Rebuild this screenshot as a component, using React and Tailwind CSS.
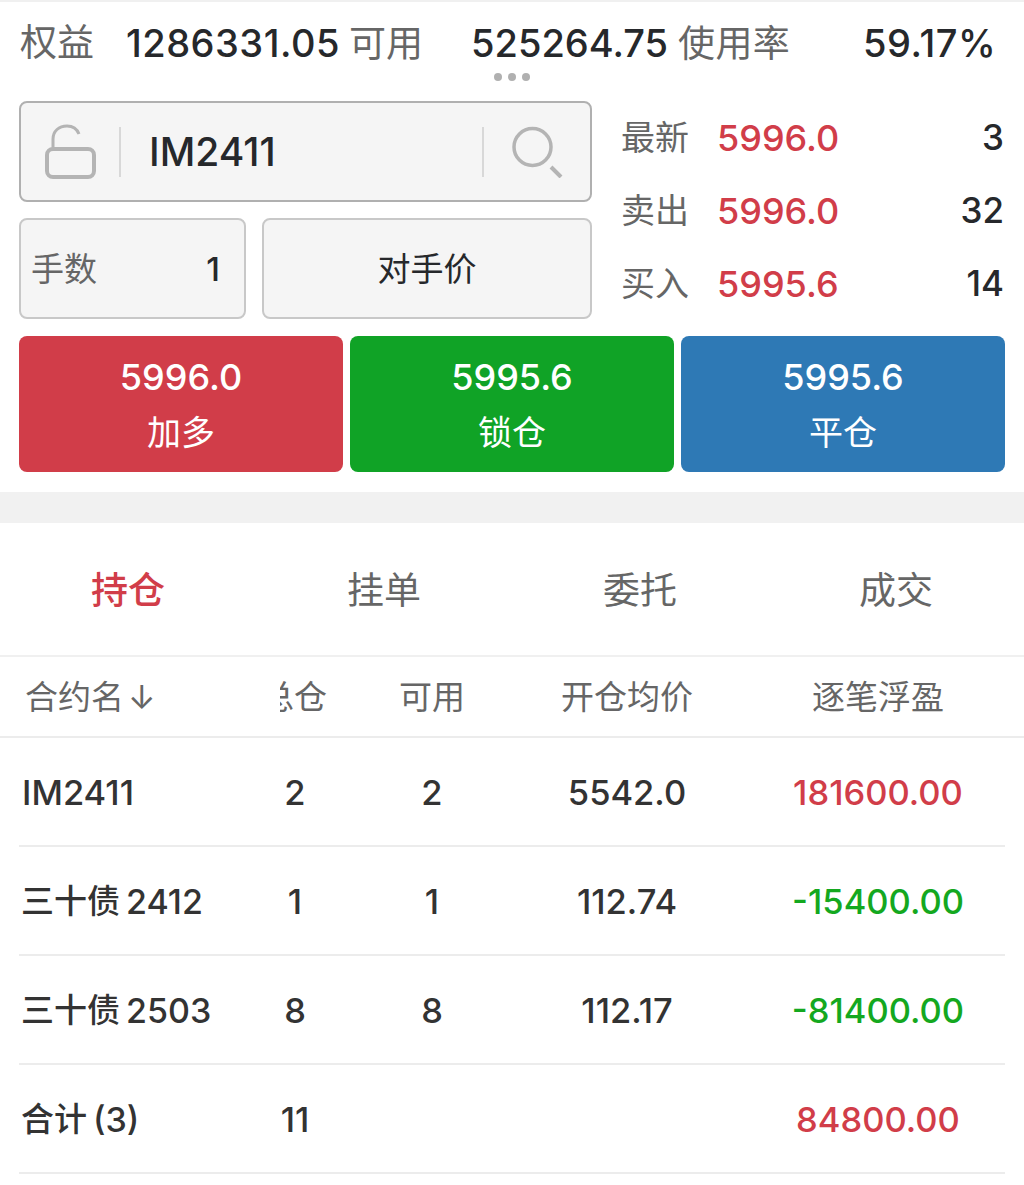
import React from 'react'

const FONT = "font-['Inter','Noto_Sans_CJK_SC',sans-serif]"
const COLS = 'grid grid-cols-[227px_136px_138px_252px_250px] items-center'

const quotes = [
  { label: '最新', price: '5996.0', vol: '3' },
  { label: '卖出', price: '5996.0', vol: '32' },
  { label: '买入', price: '5995.6', vol: '14' },
]

const actions = [
  { price: '5996.0', label: '加多', color: 'bg-[#d13d49]' },
  { price: '5995.6', label: '锁仓', color: 'bg-[#10a326]' },
  { price: '5995.6', label: '平仓', color: 'bg-[#2e79b5]' },
]

const rows = [
  { cn: '三十债', name: '2412', total: '1', avail: '1', avg: '112.74', pnl: '-15400.00', color: 'text-[#14a81f]' },
  { cn: '三十债', name: '2503', total: '8', avail: '8', avg: '112.17', pnl: '-81400.00', color: 'text-[#14a81f]' },
  { cn: '合计', name: '(3)', total: '11', avail: '', avg: '', pnl: '84800.00', color: 'text-[#d13d49]' },
]

const LockIcon = () => (
  <svg width="52" height="56" viewBox="0 0 52 56" fill="none" stroke="#b4b4b4">
    <rect x="2" y="25" width="47" height="28" rx="6" strokeWidth="4" />
    <path d="M8 25V15C8 7 14 2 22 2C28 2 32 5 34 10" strokeWidth="3" />
  </svg>
)

const SearchIcon = () => (
  <svg width="52" height="52" viewBox="0 0 52 52" fill="none" stroke="#b4b4b4">
    <circle cx="20.5" cy="21" r="18.5" strokeWidth="3.5" />
    <path d="M39 41L49 51" strokeWidth="4" />
  </svg>
)

const Row = ({ children }) => (
  <div className="h-[109px] mx-[19px] border-b-[2px] border-[#ececec]">
    <div className={`${COLS} h-full ml-[-19px] pt-[2px] text-[34.5px] font-medium text-center text-[#333333]`}>
      {children}
    </div>
  </div>
)

export default function App() {
  return (
    <div className={`${FONT} w-[1024px] h-[1185px] bg-white overflow-hidden text-[#26282b]`}>
      <div className="h-[2px] bg-[#f0f0f0]" />

      <div className="h-[71px] pl-[20px] pt-[17px] flex items-start text-[38px] leading-[48px] font-medium whitespace-nowrap">
        <span className="text-[#666666] text-[37px] font-normal w-[106px]">权益</span>
        <span className="w-[345px] tracking-[0.5px]">
          1286331.05<span className="ml-[9px] text-[#666666] font-normal text-[37px] tracking-normal">可用</span>
        </span>
        <span className="w-[394px]">
          525264.75<span className="ml-[10px] text-[#666666] font-normal text-[37px] tracking-[0.3px]">使用率</span>
        </span>
        <span className="ml-[-2px] tracking-[0.6px]">59.17%</span>
      </div>
      <div className="h-[28px] flex justify-center gap-[6px]">
        <span className="w-[8px] h-[8px] rounded-full bg-[#b0b0b0]" />
        <span className="w-[8px] h-[8px] rounded-full bg-[#b0b0b0]" />
        <span className="w-[8px] h-[8px] rounded-full bg-[#b0b0b0]" />
      </div>

      <div className="flex pl-[19px] pr-[20px]">
        <div className="w-[573px]">
          <div className="h-[101px] rounded-[8px] border-[2px] border-[#b0b0b0] bg-[#f5f5f5] flex items-center">
            <div className="w-[100px] h-[50px] flex items-center border-r-[2px] border-[#d8d8d8] pl-[24px]">
              <LockIcon />
            </div>
            <div className="flex-1 pl-[28px] text-[39px] font-medium leading-none">IM2411</div>
            <div className="w-[108px] h-[50px] flex items-center border-l-[2px] border-[#d8d8d8] pl-[28px]">
              <SearchIcon />
            </div>
          </div>
          <div className="mt-[16px] flex gap-[16px]">
            <div className="w-[227px] h-[101px] rounded-[8px] border-[2px] border-[#c8c8c8] bg-[#f5f5f5] flex items-center justify-between pl-[10px] pr-[24px] pt-[2px] text-[33px]">
              <span className="text-[#666666]">手数</span>
              <span className="font-medium">1</span>
            </div>
            <div className="flex-1 h-[101px] rounded-[8px] border-[2px] border-[#c8c8c8] bg-[#f5f5f5] flex items-center justify-center pt-[2px] text-[33px]">
              对手价
            </div>
          </div>
        </div>

        <div className="flex-1 pl-[29px] flex flex-col">
          {quotes.map((q) => (
            <div key={q.label} className="h-[73px] flex items-center text-[36px]">
              <span className="w-[96px] text-[34px] text-[#666666]">{q.label}</span>
              <span className="text-[#d13d49] font-medium">{q.price}</span>
              <span className="ml-auto font-medium text-[35px]">{q.vol}</span>
            </div>
          ))}
        </div>
      </div>

      <div className="mt-[16px] px-[19px] flex gap-[7px]">
        {actions.map((a) => (
          <div key={a.label} className={`${a.color} w-[324px] h-[136px] rounded-[8px] text-white text-[36px] flex flex-col items-center pt-[14px]`}>
            <span className="leading-[54px] font-medium">{a.price}</span>
            <span className="leading-[57px] text-[34px]">{a.label}</span>
          </div>
        ))}
      </div>

      <div className="mt-[20px] h-[31px] bg-[#f1f1f1]" />

      <div className="h-[134px] pt-[3px] grid grid-cols-4 border-b-[2px] border-[#f0f0f0] text-[37px] text-[#666666] text-center items-center">
        <span className="text-[#d13d49] font-medium">持仓</span>
        <span>挂单</span>
        <span>委托</span>
        <span>成交</span>
      </div>

      <div className={`${COLS} h-[81px] pt-[2px] border-b-[2px] border-[#ececec] text-[33px] text-[#666666] text-center`}>
        <span className="text-left pl-[25px]">合约名<span className="ml-[4px]">↓</span></span>
        <span className="flex justify-start pl-[53px]">
          <span className="w-[47px] overflow-hidden flex justify-end whitespace-nowrap">总仓</span>
        </span>
        <span>可用</span>
        <span>开仓均价</span>
        <span>逐笔浮盈</span>
      </div>

      <Row>
        <span className="text-left pl-[22px]">IM2411</span>
        <span>2</span>
        <span>2</span>
        <span>5542.0</span>
        <span className="text-[#d13d49]">181600.00</span>
      </Row>
      {rows.map((r) => (
        <Row key={r.name}>
          <span className="text-left pl-[21px] flex items-center">
            <span className="text-[33px]">{r.cn}</span>
            <span className="ml-[6px] text-[34px]">{r.name}</span>
          </span>
          <span>{r.total}</span>
          <span>{r.avail}</span>
          <span>{r.avg}</span>
          <span className={r.color}>{r.pnl}</span>
        </Row>
      ))}
    </div>
  )
}
